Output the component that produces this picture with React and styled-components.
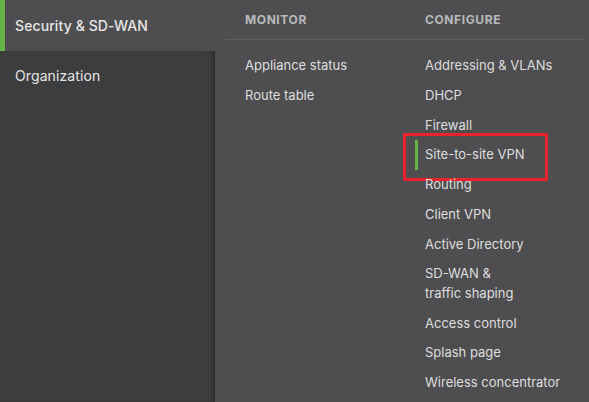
import React from "react";
import styled, { createGlobalStyle } from "styled-components";

const Global = createGlobalStyle`
  html, body { margin: 0; padding: 0; }
  body {
    background: #4e4e50;
    font-family: Inter, "Noto Sans", "Liberation Sans", sans-serif;
    -webkit-font-smoothing: antialiased;
  }
  #root { width: 589px; height: 402px; overflow: hidden; }
`;

const Layout = styled.div`
  display: flex;
  width: 589px;
  height: 402px;
  background: #4e4e50;
`;

const Sidebar = styled.nav`
  width: 215px;
  flex: none;
  display: flex;
  flex-direction: column;
`;

const SideItem = styled.div`
  height: ${(p) => (p.$active ? "51px" : "49px")};
  display: flex;
  align-items: center;
  box-sizing: border-box;
  padding-left: ${(p) => (p.$active ? "10px" : "15px")};
  border-left: ${(p) => (p.$active ? "5px solid #67b346" : "none")};
  background: ${(p) => (p.$active ? "#4e4e50" : "transparent")};
  color: #e6e6e6;
  font-size: 14px;
  font-weight: ${(p) => (p.$active ? 500 : 400)};
  letter-spacing: 0.1px;
`;

const SideRest = styled.div`
  flex: 1;
  display: flex;
  flex-direction: column;
  background: #3c3d3f;
  box-shadow: inset -7px 0 6px -5px rgba(0, 0, 0, 0.35);
`;

const Panel = styled.div`
  flex: 1;
  display: flex;
  flex-direction: column;
`;

const HeaderRow = styled.div`
  display: grid;
  grid-template-columns: 180px 1fr;
  height: 40px;
  align-items: center;
  margin: 0 4px 0 10px;
  padding-left: 20px;
  border-bottom: 1px solid #5e5e60;
  box-sizing: border-box;
`;

const ColTitle = styled.div`
  color: #b9b9bb;
  font-size: 12px;
  font-weight: 700;
  letter-spacing: 0.6px;
  text-transform: uppercase;
`;

const Columns = styled.div`
  display: grid;
  grid-template-columns: 180px 1fr;
  padding: 11px 0 0 30px;
`;

const List = styled.ul`
  list-style: none;
  margin: 0;
  padding: 0;
`;

const Item = styled.li`
  position: relative;
  color: #dedede;
  font-size: 13px;
  line-height: 19.5px;
  padding: 5.125px 0;
`;

const ActiveBar = styled.span`
  position: absolute;
  left: -10px;
  top: 0;
  bottom: 0;
  width: 3px;
  background: #67b346;
`;

const Highlight = styled.span`
  position: absolute;
  left: -22px;
  top: -7px;
  width: 145px;
  height: 48px;
  box-sizing: border-box;
  border: 3px solid #e8232b;
  border-radius: 1px;
  pointer-events: none;
`;

const monitor = ["Appliance status", "Route table"];
const configure = [
  "Addressing & VLANs",
  "DHCP",
  "Firewall",
  "Site-to-site VPN",
  "Routing",
  "Client VPN",
  "Active Directory",
  ["SD-WAN &", "traffic shaping"],
  "Access control",
  "Splash page",
  "Wireless concentrator",
];

export default function App() {
  return (
    <>
      <Global />
      <Layout>
        <Sidebar>
          <SideItem $active>Security &amp; SD-WAN</SideItem>
          <SideRest>
            <SideItem>Organization</SideItem>
          </SideRest>
        </Sidebar>
        <Panel>
          <HeaderRow>
            <ColTitle>Monitor</ColTitle>
            <ColTitle>Configure</ColTitle>
          </HeaderRow>
          <Columns>
            <List>
              {monitor.map((m) => (
                <Item key={m}>{m}</Item>
              ))}
            </List>
            <List>
              {configure.map((c) => {
                const label = Array.isArray(c) ? c.join(" ") : c;
                const active = label === "Site-to-site VPN";
                return (
                  <Item key={label}>
                    {active && <ActiveBar />}
                    {active && <Highlight />}
                    {Array.isArray(c) ? (
                      <>
                        {c[0]}
                        <br />
                        {c[1]}
                      </>
                    ) : (
                      c
                    )}
                  </Item>
                );
              })}
            </List>
          </Columns>
        </Panel>
      </Layout>
    </>
  );
}
